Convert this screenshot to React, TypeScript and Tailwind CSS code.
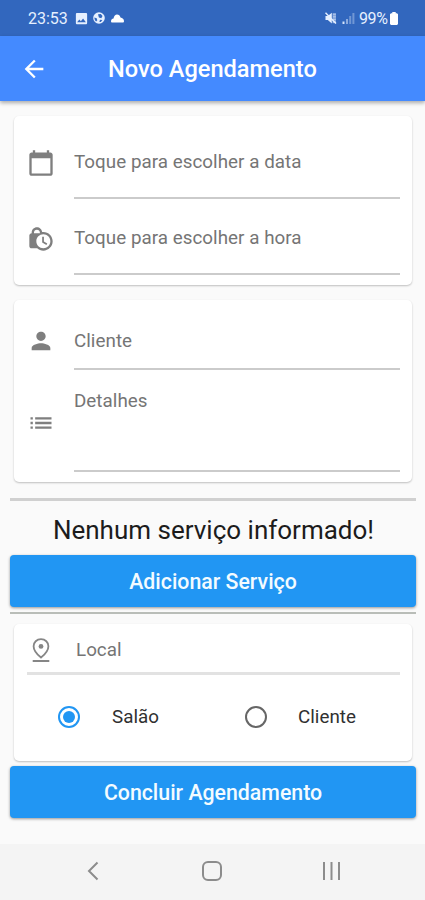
import type { ReactNode } from "react";
import {
  MdArrowBack,
  MdCalendarToday,
  MdCloud,
  MdImage,
  MdList,
  MdLockClock,
  MdPerson,
} from "react-icons/md";

function StatusBar() {
  return (
    <div className="flex h-9 items-center justify-between bg-[#3267be] pl-7 pr-[27px] text-[#e6f0ff]">
      <div className="flex items-center">
        <span className="w-[46px] whitespace-nowrap pt-px text-[16px] leading-none">23:53</span>
        <MdImage size={15} />
        <svg className="ml-1 h-3 w-3" viewBox="0 0 12 12">
          <circle cx="6" cy="6" r="5.8" fill="currentColor" />
          <path d="M5 2.2 7.8 2l1.7 2-1.2 2.2-2.4-.6zM1.4 5.6l2.3.6.6 2-1.2 1.4C2 8.6 1.4 7.4 1.4 5.6zM7 7.8l2.4.2-1.6 2L6.4 10z" fill="#3267be" />
        </svg>
        <svg className="ml-[6px] h-[9px] w-[13px]" viewBox="0 0 13 9" fill="#fff">
          <path d="M0 7.2C0 5.4 1.2 4.6 2.5 4.4 3 1.9 4.4.6 6 .6c1.9 0 3 1.2 3.5 2.8C11.500 3.700 13 5 13 7.200 13 8 12.500 8.500 11.700 8.500H1.300C.5 8.500 0 8 0 7.200z" />
        </svg>
      </div>
      <div className="flex items-center">
        <svg className="h-3 w-3" viewBox="0 0 12 12">
          <path d="M.5 4h2.3L6.8 .8v10.6L2.8 8H.5z" fill="currentColor" />
          <path d="M7.5 1.2H11v10H7.5z" fill="currentColor" opacity=".45" />
          <path d="M8 2.2h2.8M8 4.8h2.8M8 7.4h2.8M8 10h2.8" stroke="currentColor" strokeWidth="1" opacity=".5" />
          <path d="M.5.8 11 11.4" stroke="currentColor" strokeWidth="1.4" />
        </svg>
        <svg className="ml-[5px] h-3 w-[13px]" viewBox="0 0 13 12" fill="currentColor">
          <path d="M.5 9.5h2V12h-2z" opacity=".9" />
          <path d="M4 7h2v5H4z" opacity=".5" />
          <path d="M7.2 4h2v8h-2zM10.4 1h2v11h-2z" opacity=".35" />
        </svg>
        <span className="ml-[4px] w-[31px] whitespace-nowrap pt-px text-[16px] leading-none tracking-[-0.4px]">99%</span>
        <svg className="h-[13px] w-[8px]" viewBox="0 0 8 13" fill="#fff">
          <path d="M2.3 0h3.4v1.3H7l1 1V12l-1 1H1l-1-1V2.3l1-1h1.3z" />
        </svg>
      </div>
    </div>
  );
}

function Card({ className, children }: { className: string; children: ReactNode }) {
  return (
    <section className={`ml-[14px] mr-[13px] rounded-[5px] bg-white shadow-[0_1px_2px_rgba(0,0,0,0.24)] ${className}`}>
      {children}
    </section>
  );
}

interface FieldProps {
  icon: ReactNode;
  label: string;
  className: string;
  iconClass: string;
  labelClass: string;
}

function Field({ icon, label, className, iconClass, labelClass }: FieldProps) {
  return (
    <div className={`flex pl-[13px] pr-3 ${className}`}>
      <div className={`flex w-[47px] shrink-0 items-center text-[#7f7f7f] ${iconClass}`}>{icon}</div>
      <div className={`flex-1 whitespace-nowrap border-b-2 border-[#cbcbcb] text-[18.8px] leading-6 tracking-[0.04px] text-[#757575] ${labelClass}`}>
        {label}
      </div>
    </div>
  );
}

function PinIcon() {
  return (
    <svg className="size-7 text-[#868686]" viewBox="0 0 28 28" fill="none" stroke="currentColor" strokeWidth="1.8">
      <path d="M14 3.2c-4.3 0-7.4 3.1-7.400 7 0 4.400 3.700 8.400 7.400 11.300 3.700-2.900 7.400-6.900 7.400-11.300 0-3.900-3.100-7-7.400-7z" />
      <circle cx="14" cy="10.4" r="2.4" fill="currentColor" stroke="none" />
      <path d="M5.7 25h16.6" strokeWidth="2" />
    </svg>
  );
}

function ActionButton({ className, children }: { className: string; children: ReactNode }) {
  return (
    <button className={`ml-[10px] mr-[9px] flex h-[52px] shrink-0 items-center justify-center rounded-[4px] bg-[#2196f3] pt-[2px] text-[21.3px] font-medium text-[#f3fbff] shadow-[0_1px_3px_rgba(0,0,0,0.4)] ${className}`}>
      {children}
    </button>
  );
}

function Radio({ checked }: { checked?: boolean }) {
  return (
    <span className={`flex size-[22px] items-center justify-center rounded-full border-2 ${checked ? "border-[#2196f3]" : "border-[#666]"}`}>
      {checked && <span className="size-3 rounded-full bg-[#2196f3]" />}
    </span>
  );
}

export default function App() {
  return (
    <div className="flex h-[900px] w-[425px] flex-col overflow-hidden bg-[#fafafa] font-['Roboto',sans-serif]">
      <StatusBar />
      <header className="flex h-[65px] shrink-0 items-center bg-[#448aff] pl-5 text-white shadow-[0_2px_4px_rgba(0,0,0,0.32)]">
        <MdArrowBack size={28} />
        <h1 className="ml-[60px] whitespace-nowrap pt-[2px] text-[23.6px] font-medium">Novo Agendamento</h1>
      </header>

      <main className="flex flex-1 flex-col">
        <Card className="mt-[15px] h-[169px]">
          <Field icon={<MdCalendarToday size={28} />} label="Toque para escolher a data" className="h-[83px]" iconClass="pt-[10px]" labelClass="pt-[34px]" />
          <Field icon={<MdLockClock size={28} />} label="Toque para escolher a hora" className="h-[76px]" iconClass="pt-[3px]" labelClass="pt-[27px]" />
        </Card>

        <Card className="mt-[15px] h-[182px]">
          <Field icon={<MdPerson size={28} />} label="Cliente" className="h-[70px]" iconClass="pt-3" labelClass="pt-[29px]" />
          <Field icon={<MdList size={28} />} label="Detalhes" className="h-[102px]" iconClass="pt-[3px]" labelClass="pt-[19px]" />
        </Card>

        <div className="mt-4 ml-[10px] mr-[9px] h-[3px] bg-[#d0d0d0]" />
        <p className="flex h-[54px] items-center justify-center whitespace-nowrap pl-[2px] pt-[4px] text-[26px] text-[#1c1c1c]">
          Nenhum serviço informado!
        </p>
        <ActionButton className="">Adicionar Serviço</ActionButton>
        <div className="mt-[5px] ml-[10px] mr-[9px] h-[2px] bg-[#b9bdb8]" />

        <Card className="mt-[10px] h-[137px]">
          <div className="ml-[13px] mr-3 flex h-[51px] items-center border-b-[3px] border-[#e2e2e2] pt-[3px] text-[18.8px] tracking-[0.02px] text-[#757575]">
            <PinIcon />
            <span className="ml-[21px] pt-[2px]">Local</span>
          </div>
          <div className="flex h-[84px] items-center pl-11 text-[18.8px] tracking-[0.02px] text-[#303030]">
            <Radio checked />
            <span className="ml-8 w-[133px]">Salão</span>
            <Radio />
            <span className="ml-[31px]">Cliente</span>
          </div>
        </Card>
        <ActionButton className="mt-[5px]">Concluir Agendamento</ActionButton>
      </main>

      <nav className="flex h-14 shrink-0 items-center bg-[#f4f4f4] pb-[2px] pl-[87px] text-[#8c8c8c]">
        <svg className="h-5 w-3" viewBox="0 0 12 20" fill="none" stroke="currentColor" strokeWidth="2">
          <path d="M10.5 1.5 2 10l8.5 8.5" />
        </svg>
        <span className="ml-[103px] h-5 w-[20px] rounded-[6px] border-2 border-[#8c8c8c]" />
        <svg className="ml-[100px] h-[18px] w-[20px]" viewBox="0 0 20 18" stroke="currentColor" strokeWidth="2">
          <path d="M2 0v18M9.5 0v18M17 0v18" />
        </svg>
      </nav>
    </div>
  );
}
